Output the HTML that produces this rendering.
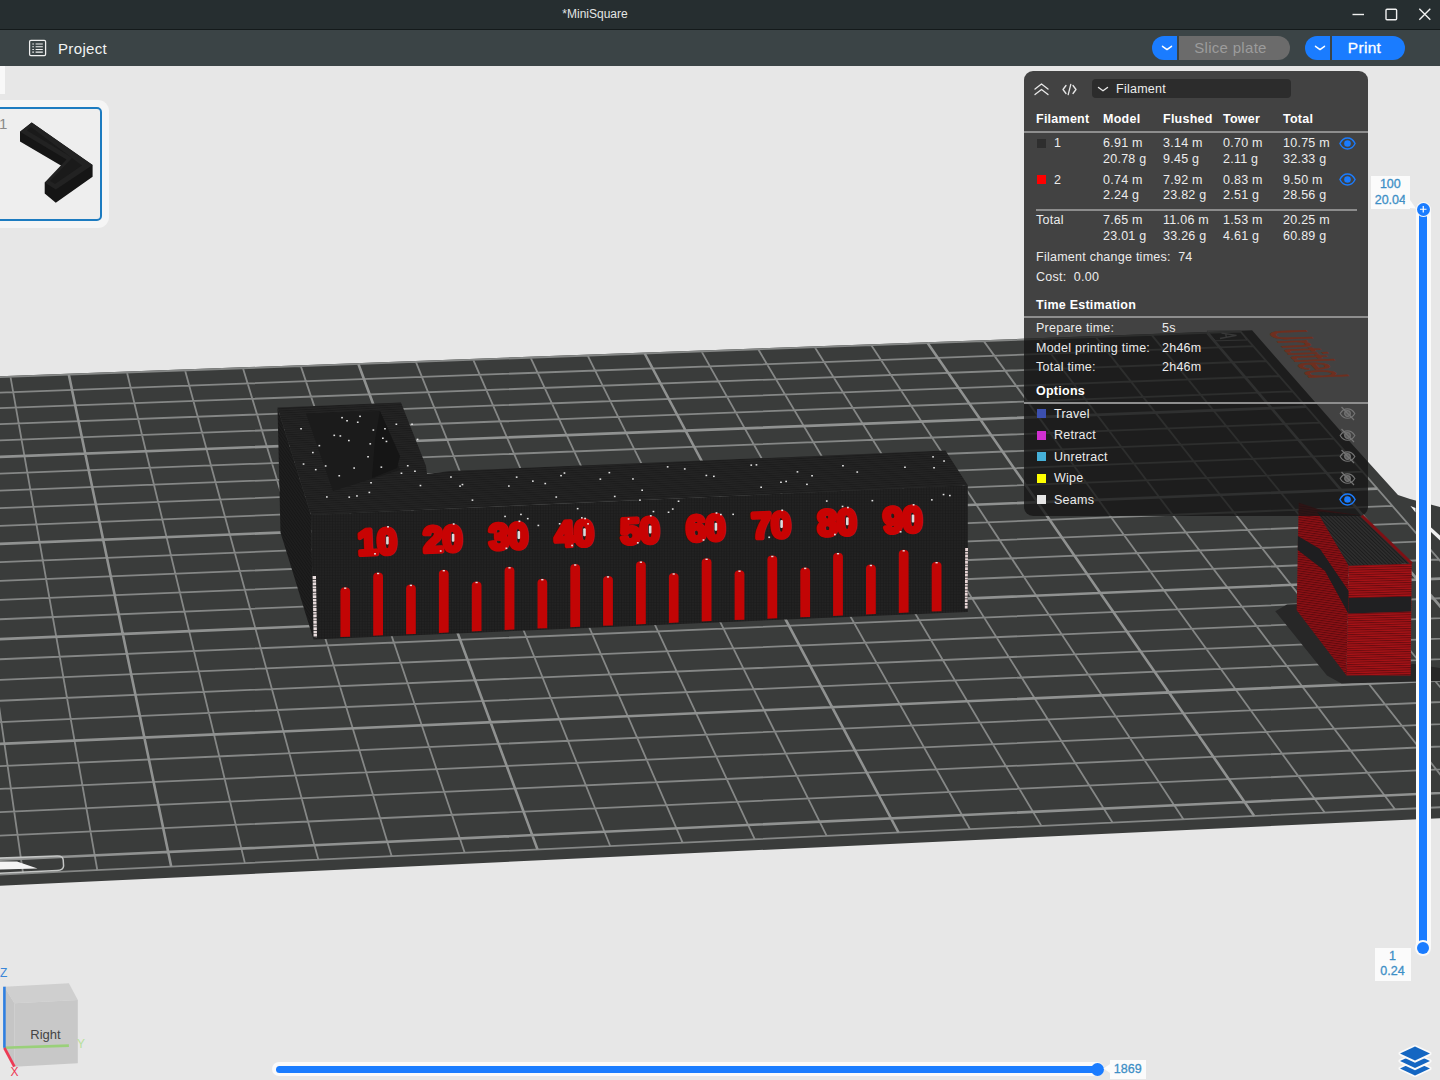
<!DOCTYPE html>
<html><head><meta charset="utf-8"><title>MiniSquare</title>
<style>
html,body{margin:0;padding:0}
body{width:1440px;height:1080px;overflow:hidden;background:#e7e7e7;font-family:"Liberation Sans",sans-serif;position:relative}
.abs{position:absolute}

#title{left:0;top:0;width:1440px;height:29px;background:#262e30}
#title .t{position:absolute;left:0;width:1190px;top:7px;text-align:center;color:#e3e5e5;font-size:12px}
#tab{left:0;top:29px;width:1440px;height:37px;background:#3b4446;border-top:1px solid #141a1b;box-sizing:border-box}
#tab .p{position:absolute;left:58px;top:9.5px;color:#f2f4f4;font-size:15px;letter-spacing:0.35px}
.btn{position:absolute;top:36px;height:24px}
.seg{position:absolute;top:0;height:24px;box-sizing:border-box}
.pnl{left:1024px;top:70.5px;width:344px;height:445px;border-radius:9px;background:rgba(22,22,22,0.79);color:#ececec;font-size:12.5px}
.pnl div{position:absolute;white-space:nowrap;line-height:14px;letter-spacing:0.25px}
.pnl .b{font-weight:bold;color:#fff}
.pnl .hl{height:1.5px;background:#8e8e8e}
.sw{width:9px;height:9px}
.lbl{background:#fbfbfb;color:#3d8fc6;-webkit-text-stroke:0.3px #3d8fc6;font-size:12.5px;text-align:center;line-height:15.5px}

</style></head><body>
<svg class="abs" style="left:0;top:66px" width="1440" height="1014" viewBox="0 0 1440 1014">
<polygon points="-580.3,331.5 1252.1,264.3 1353.9,380.3 1398.0,429.0 1410.0,433.0 1440.0,441.0 1500.0,454.0 1670.8,741.3 -656.0,850.5" fill="#3a3c3b"/>
<path d="M-165.3 317.2 L-125.8 814.4 M-106.6 315.1 L-51.2 810.9 M-48.0 312.9 L23.1 807.5 M10.5 310.8 L97.3 804.0 M127.0 306.5 L244.9 797.1 M185.1 304.4 L318.4 793.7 M243.0 302.2 L391.7 790.2 M300.8 300.1 L464.7 786.8 M415.9 295.9 L610.2 780.0 M473.3 293.8 L682.6 776.6 M530.6 291.7 L754.8 773.3 M587.7 289.6 L826.7 769.9 M701.5 285.4 L970.0 763.2 M758.2 283.3 L1041.4 759.9 M814.8 281.3 L1112.5 756.5 M871.3 279.2 L1183.4 753.2 M983.8 275.1 L1324.7 746.6 M1039.8 273.0 L1395.0 743.3 M1095.8 270.9 L1465.1 740.1 M1151.6 268.9 L1535.0 736.8 M1240.6 265.6 L1646.4 731.6 M-224.2 319.4 L1240.6 265.6 M-223.5 334.8 L1253.3 280.2 M-222.7 350.5 L1266.1 295.0 M-222.0 366.5 L1279.2 310.0 M-221.2 382.8 L1292.5 325.3 M-219.6 416.1 L1319.8 356.6 M-218.8 433.2 L1333.8 372.7 M-218.0 450.7 L1348.1 389.1 M-217.2 468.4 L1362.6 405.7 M-215.4 504.9 L1392.3 439.9 M-214.6 523.6 L1407.6 457.4 M-213.7 542.7 L1423.2 475.3 M-212.7 562.1 L1439.0 493.5 M-210.8 602.2 L1471.6 530.9 M-209.9 622.8 L1488.3 550.1 M-208.9 643.8 L1505.4 569.7 M-207.9 665.2 L1522.7 589.6 M-205.8 709.3 L1558.5 630.7 M-204.7 732.0 L1577.0 651.9 M-203.6 755.3 L1595.7 673.4 M-202.5 779.0 L1614.9 695.4 M-200.6 817.9 L1646.4 731.6" stroke="#858786" stroke-width="1.8" fill="none"/>
<path d="M-224.2 319.4 L-200.6 817.9 M68.8 308.6 L171.2 800.5 M358.4 298.0 L537.5 783.4 M644.7 287.5 L898.5 766.5 M927.6 277.1 L1254.2 749.9 M1207.3 266.9 L1604.7 733.5 M-220.4 399.3 L1306.1 340.8 M-216.3 486.5 L1377.3 422.6 M-211.8 582.0 L1455.1 512.0 M-206.8 687.0 L1540.5 610.0 M-201.3 803.1 L1634.5 717.9" stroke="#909291" stroke-width="2.6" fill="none"/>
<defs>
<pattern id="pf" width="2.7" height="2.7" patternUnits="userSpaceOnUse"><rect width="2.7" height="2.7" fill="#222222"/><path d="M0 0H2.7M0 0V2.7" stroke="#191919" stroke-width="1"/></pattern>
<pattern id="pt" width="3" height="2.2" patternUnits="userSpaceOnUse" patternTransform="rotate(-3)"><rect width="3" height="2.2" fill="#242424"/><path d="M0 0.5H3" stroke="#1b1b1b" stroke-width="0.9"/></pattern>
<pattern id="pl" width="2.4" height="2.4" patternUnits="userSpaceOnUse" patternTransform="rotate(55)"><rect width="2.4" height="2.4" fill="#1e1e1e"/><path d="M0 0.5H2.4" stroke="#161616" stroke-width="0.9"/></pattern>
<pattern id="rf" width="8" height="2.3" patternUnits="userSpaceOnUse" patternTransform="rotate(-1.5)"><rect width="8" height="2.3" fill="#a81216"/><path d="M0 0.5H8" stroke="#6a0c10" stroke-width="1"/></pattern>
<pattern id="rl" width="8" height="2.3" patternUnits="userSpaceOnUse" patternTransform="rotate(8)"><rect width="8" height="2.3" fill="#8e1014"/><path d="M0 0.5H8" stroke="#5e0a0e" stroke-width="1"/></pattern>
<pattern id="tt" width="2.6" height="6" patternUnits="userSpaceOnUse" patternTransform="rotate(-46)"><rect width="2.6" height="6" fill="#2e2e2e"/><path d="M0.5 0V6" stroke="#1c1c1c" stroke-width="1"/></pattern>
</defs>
<g transform="translate(0,-66)">
<path d="M-2 858.2 L57 856 Q63 855.8 63.2 860 L63.6 866 Q63.4 870.2 57 870.6 L-2 873.3" fill="none" stroke="#c4c6c5" stroke-width="1.5"/>
<polygon points="-1,861.6 17,861.5 37.5,868.6 -1,869.6" fill="#f4f4f4"/>
<polygon points="1410.5,506 1415.5,508 1415.5,512.5" fill="#f0f0f0"/>
<polygon points="1430.5,527 1440,535.5 1440,540.5 1430.5,531.5" fill="#f0f0f0"/>
<polygon points="1207,331 1240,330.6 1247,340 1215.5,340.8" fill="none" stroke="#9a9c9b" stroke-width="1"/>
<path d="M1220 338.5 L1236.5 335.3 L1221.5 333.2 M1226.5 337.3 L1225.5 333.8" fill="none" stroke="#b8b8b8" stroke-width="1.3"/>
<polygon points="277.5,407.5 311.0,515.0 313.5,639.4 280.5,532.5" fill="url(#pl)"/>
<polygon points="277.5,407.5 401.0,402.5 426.0,466.0 427.0,474.0 450.0,471.0 945.4,450.6 967.8,485.2 311.0,515.0" fill="url(#pt)"/>
<polygon points="306.0,413.5 380.0,411.0 400.0,470.0 333.0,491.0" fill="#1b1b1b"/>
<polygon points="380.0,411.0 400.0,456.0 397.0,468.0 372.0,478.0 375.0,440.0" fill="#151515"/>
<polygon points="311.0,515.0 967.8,485.2 967.8,612.0 313.5,639.4" fill="url(#pf)"/>
<path d="M340.4 637.1 V591.2 Q340.4 587.2 345.2 587.2 Q350.1 587.2 350.1 591.2 V636.7 Z" fill="#c20505"/>
<path d="M373.2 635.7 V576.5 Q373.2 572.5 378.1 572.5 Q383.0 572.5 383.0 576.5 V635.3 Z" fill="#c20505"/>
<path d="M406.1 634.3 V588.4 Q406.1 584.4 410.9 584.4 Q415.8 584.4 415.8 588.4 V633.9 Z" fill="#c20505"/>
<path d="M438.9 632.9 V573.7 Q438.9 569.7 443.8 569.7 Q448.7 569.7 448.7 573.7 V632.5 Z" fill="#c20505"/>
<path d="M471.8 631.4 V585.5 Q471.8 581.5 476.6 581.5 Q481.5 581.5 481.5 585.5 V631.0 Z" fill="#c20505"/>
<path d="M504.6 630.0 V570.8 Q504.6 566.8 509.5 566.8 Q514.4 566.8 514.4 570.8 V629.6 Z" fill="#c20505"/>
<path d="M537.5 628.6 V582.7 Q537.5 578.7 542.4 578.7 Q547.2 578.7 547.2 582.7 V628.2 Z" fill="#c20505"/>
<path d="M570.3 627.2 V568.0 Q570.3 564.0 575.2 564.0 Q580.1 564.0 580.1 568.0 V626.8 Z" fill="#c20505"/>
<path d="M603.1 625.8 V579.9 Q603.1 575.9 608.0 575.9 Q612.9 575.9 612.9 579.9 V625.4 Z" fill="#c20505"/>
<path d="M636.0 624.4 V565.2 Q636.0 561.2 640.9 561.2 Q645.8 561.2 645.8 565.2 V624.0 Z" fill="#c20505"/>
<path d="M668.9 622.9 V577.0 Q668.9 573.0 673.8 573.0 Q678.6 573.0 678.6 577.0 V622.5 Z" fill="#c20505"/>
<path d="M701.7 621.5 V562.3 Q701.7 558.3 706.6 558.3 Q711.5 558.3 711.5 562.3 V621.1 Z" fill="#c20505"/>
<path d="M734.6 620.1 V574.2 Q734.6 570.2 739.5 570.2 Q744.4 570.2 744.4 574.2 V619.7 Z" fill="#c20505"/>
<path d="M767.4 618.7 V559.5 Q767.4 555.5 772.3 555.5 Q777.2 555.5 777.2 559.5 V618.3 Z" fill="#c20505"/>
<path d="M800.3 617.3 V571.4 Q800.3 567.4 805.2 567.4 Q810.1 567.4 810.1 571.4 V616.9 Z" fill="#c20505"/>
<path d="M833.1 615.9 V556.7 Q833.1 552.7 838.0 552.7 Q842.9 552.7 842.9 556.7 V615.5 Z" fill="#c20505"/>
<path d="M866.0 614.4 V568.5 Q866.0 564.5 870.9 564.5 Q875.8 564.5 875.8 568.5 V614.0 Z" fill="#c20505"/>
<path d="M898.8 613.0 V553.8 Q898.8 549.8 903.7 549.8 Q908.6 549.8 908.6 553.8 V612.6 Z" fill="#c20505"/>
<path d="M931.7 611.6 V565.7 Q931.7 561.7 936.6 561.7 Q941.5 561.7 941.5 565.7 V611.2 Z" fill="#c20505"/>
<text x="376.6" y="554.2" transform="rotate(-2.5 378.1 541.0)" font-family="Liberation Sans" font-weight="bold" font-size="36" letter-spacing="-0.5" text-anchor="middle" fill="#c80303" stroke="#c80303" stroke-width="4.2" stroke-linejoin="round">10</text>
<text x="442.3" y="551.4" transform="rotate(-2.5 443.8 538.2)" font-family="Liberation Sans" font-weight="bold" font-size="36" letter-spacing="-0.5" text-anchor="middle" fill="#c80303" stroke="#c80303" stroke-width="4.2" stroke-linejoin="round">20</text>
<text x="508.0" y="548.7" transform="rotate(-2.5 509.5 535.5)" font-family="Liberation Sans" font-weight="bold" font-size="36" letter-spacing="-0.5" text-anchor="middle" fill="#c80303" stroke="#c80303" stroke-width="4.2" stroke-linejoin="round">30</text>
<text x="573.7" y="545.9" transform="rotate(-2.5 575.2 532.7)" font-family="Liberation Sans" font-weight="bold" font-size="36" letter-spacing="-0.5" text-anchor="middle" fill="#c80303" stroke="#c80303" stroke-width="4.2" stroke-linejoin="round">40</text>
<text x="639.4" y="543.2" transform="rotate(-2.5 640.9 530.0)" font-family="Liberation Sans" font-weight="bold" font-size="36" letter-spacing="-0.5" text-anchor="middle" fill="#c80303" stroke="#c80303" stroke-width="4.2" stroke-linejoin="round">50</text>
<text x="705.1" y="540.4" transform="rotate(-2.5 706.6 527.2)" font-family="Liberation Sans" font-weight="bold" font-size="36" letter-spacing="-0.5" text-anchor="middle" fill="#c80303" stroke="#c80303" stroke-width="4.2" stroke-linejoin="round">60</text>
<text x="770.8" y="537.7" transform="rotate(-2.5 772.3 524.5)" font-family="Liberation Sans" font-weight="bold" font-size="36" letter-spacing="-0.5" text-anchor="middle" fill="#c80303" stroke="#c80303" stroke-width="4.2" stroke-linejoin="round">70</text>
<text x="836.5" y="534.9" transform="rotate(-2.5 838.0 521.7)" font-family="Liberation Sans" font-weight="bold" font-size="36" letter-spacing="-0.5" text-anchor="middle" fill="#c80303" stroke="#c80303" stroke-width="4.2" stroke-linejoin="round">80</text>
<text x="902.2" y="532.2" transform="rotate(-2.5 903.7 519.0)" font-family="Liberation Sans" font-weight="bold" font-size="36" letter-spacing="-0.5" text-anchor="middle" fill="#c80303" stroke="#c80303" stroke-width="4.2" stroke-linejoin="round">90</text>
<g fill="#dcdcdc"><rect x="344.1" y="587.5" width="2.2" height="1.4"/><rect x="377.0" y="572.8" width="2.2" height="1.4"/><rect x="409.8" y="584.7" width="2.2" height="1.4"/><rect x="442.7" y="570.0" width="2.2" height="1.4"/><rect x="475.5" y="581.8" width="2.2" height="1.4"/><rect x="508.4" y="567.1" width="2.2" height="1.4"/><rect x="541.2" y="579.0" width="2.2" height="1.4"/><rect x="574.1" y="564.3" width="2.2" height="1.4"/><rect x="606.9" y="576.2" width="2.2" height="1.4"/><rect x="639.8" y="561.5" width="2.2" height="1.4"/><rect x="672.6" y="573.3" width="2.2" height="1.4"/><rect x="705.5" y="558.6" width="2.2" height="1.4"/><rect x="738.4" y="570.5" width="2.2" height="1.4"/><rect x="771.2" y="555.8" width="2.2" height="1.4"/><rect x="804.1" y="567.7" width="2.2" height="1.4"/><rect x="836.9" y="553.0" width="2.2" height="1.4"/><rect x="869.8" y="564.8" width="2.2" height="1.4"/><rect x="902.6" y="550.1" width="2.2" height="1.4"/><rect x="935.5" y="562.0" width="2.2" height="1.4"/><rect x="386.1" y="536.5" width="2.6" height="8" rx="1"/><rect x="374.1" y="553.0" width="1.8" height="1.6"/><rect x="387.1" y="526.0" width="1.8" height="1.6"/><rect x="451.8" y="533.7" width="2.6" height="8" rx="1"/><rect x="439.8" y="550.2" width="1.8" height="1.6"/><rect x="452.8" y="523.2" width="1.8" height="1.6"/><rect x="517.5" y="531.0" width="2.6" height="8" rx="1"/><rect x="505.5" y="547.5" width="1.8" height="1.6"/><rect x="518.5" y="520.5" width="1.8" height="1.6"/><rect x="583.2" y="528.2" width="2.6" height="8" rx="1"/><rect x="571.2" y="544.7" width="1.8" height="1.6"/><rect x="584.2" y="517.7" width="1.8" height="1.6"/><rect x="648.9" y="525.5" width="2.6" height="8" rx="1"/><rect x="636.9" y="542.0" width="1.8" height="1.6"/><rect x="649.9" y="515.0" width="1.8" height="1.6"/><rect x="714.6" y="522.7" width="2.6" height="8" rx="1"/><rect x="702.6" y="539.2" width="1.8" height="1.6"/><rect x="715.6" y="512.2" width="1.8" height="1.6"/><rect x="780.3" y="520.0" width="2.6" height="8" rx="1"/><rect x="768.3" y="536.5" width="1.8" height="1.6"/><rect x="781.3" y="509.5" width="1.8" height="1.6"/><rect x="846.0" y="517.2" width="2.6" height="8" rx="1"/><rect x="834.0" y="533.7" width="1.8" height="1.6"/><rect x="847.0" y="506.7" width="1.8" height="1.6"/><rect x="911.7" y="514.5" width="2.6" height="8" rx="1"/><rect x="899.7" y="531.0" width="1.8" height="1.6"/><rect x="912.7" y="504.0" width="1.8" height="1.6"/></g>
<g fill="#e4e4e4"><rect x="338.4" y="475.0" width="1.7" height="1.5"/><rect x="324.8" y="465.2" width="1.7" height="1.5"/><rect x="346.2" y="420.0" width="1.7" height="1.5"/><rect x="581.0" y="517.1" width="1.7" height="1.5"/><rect x="382.0" y="437.5" width="1.7" height="1.5"/><rect x="395.5" y="423.5" width="1.7" height="1.5"/><rect x="504.2" y="515.7" width="1.7" height="1.5"/><rect x="419.6" y="484.8" width="1.7" height="1.5"/><rect x="339.5" y="435.2" width="1.7" height="1.5"/><rect x="750.4" y="464.4" width="1.7" height="1.5"/><rect x="508.0" y="485.3" width="1.7" height="1.5"/><rect x="825.9" y="500.3" width="1.7" height="1.5"/><rect x="461.6" y="483.8" width="1.7" height="1.5"/><rect x="576.8" y="507.9" width="1.7" height="1.5"/><rect x="400.6" y="472.5" width="1.7" height="1.5"/><rect x="326.0" y="496.2" width="1.7" height="1.5"/><rect x="806.1" y="483.6" width="1.7" height="1.5"/><rect x="760.3" y="486.5" width="1.7" height="1.5"/><rect x="683.9" y="468.2" width="1.7" height="1.5"/><rect x="613.9" y="495.7" width="1.7" height="1.5"/><rect x="555.4" y="496.3" width="1.7" height="1.5"/><rect x="314.9" y="468.9" width="1.7" height="1.5"/><rect x="411.2" y="423.5" width="1.7" height="1.5"/><rect x="385.6" y="440.7" width="1.7" height="1.5"/><rect x="558.8" y="523.0" width="1.7" height="1.5"/><rect x="353.3" y="467.3" width="1.7" height="1.5"/><rect x="537.5" y="524.7" width="1.7" height="1.5"/><rect x="416.7" y="438.6" width="1.7" height="1.5"/><rect x="302.7" y="463.3" width="1.7" height="1.5"/><rect x="544.4" y="482.8" width="1.7" height="1.5"/><rect x="931.0" y="499.1" width="1.7" height="1.5"/><rect x="641.3" y="489.5" width="1.7" height="1.5"/><rect x="368.5" y="491.7" width="1.7" height="1.5"/><rect x="341.2" y="416.9" width="1.7" height="1.5"/><rect x="300.2" y="428.0" width="1.7" height="1.5"/><rect x="367.2" y="456.0" width="1.7" height="1.5"/><rect x="608.5" y="471.9" width="1.7" height="1.5"/><rect x="356.9" y="421.5" width="1.7" height="1.5"/><rect x="871.5" y="499.9" width="1.7" height="1.5"/><rect x="652.6" y="510.8" width="1.7" height="1.5"/><rect x="841.7" y="505.7" width="1.7" height="1.5"/><rect x="450.1" y="476.3" width="1.7" height="1.5"/><rect x="318.5" y="444.9" width="1.7" height="1.5"/><rect x="471.6" y="499.4" width="1.7" height="1.5"/><rect x="933.2" y="467.0" width="1.7" height="1.5"/><rect x="932.2" y="456.1" width="1.7" height="1.5"/><rect x="856.4" y="471.3" width="1.7" height="1.5"/><rect x="732.3" y="513.6" width="1.7" height="1.5"/><rect x="356.1" y="495.2" width="1.7" height="1.5"/><rect x="796.6" y="471.1" width="1.7" height="1.5"/><rect x="520.1" y="513.7" width="1.7" height="1.5"/><rect x="943.2" y="460.3" width="1.7" height="1.5"/><rect x="384.1" y="428.0" width="1.7" height="1.5"/><rect x="949.0" y="494.8" width="1.7" height="1.5"/><rect x="532.0" y="480.4" width="1.7" height="1.5"/><rect x="942.7" y="493.8" width="1.7" height="1.5"/><rect x="587.2" y="523.1" width="1.7" height="1.5"/><rect x="459.2" y="485.4" width="1.7" height="1.5"/><rect x="632.1" y="478.2" width="1.7" height="1.5"/><rect x="414.1" y="470.5" width="1.7" height="1.5"/><rect x="780.1" y="481.5" width="1.7" height="1.5"/><rect x="515.8" y="476.4" width="1.7" height="1.5"/><rect x="667.7" y="511.5" width="1.7" height="1.5"/><rect x="370.2" y="482.0" width="1.7" height="1.5"/><rect x="811.2" y="475.0" width="1.7" height="1.5"/><rect x="671.9" y="508.3" width="1.7" height="1.5"/><rect x="904.1" y="466.5" width="1.7" height="1.5"/><rect x="705.5" y="474.7" width="1.7" height="1.5"/><rect x="639.1" y="499.4" width="1.7" height="1.5"/><rect x="599.5" y="478.4" width="1.7" height="1.5"/><rect x="380.5" y="466.4" width="1.7" height="1.5"/><rect x="348.0" y="439.8" width="1.7" height="1.5"/><rect x="348.4" y="496.4" width="1.7" height="1.5"/><rect x="563.6" y="472.3" width="1.7" height="1.5"/><rect x="406.9" y="465.0" width="1.7" height="1.5"/><rect x="666.8" y="466.1" width="1.7" height="1.5"/><rect x="312.0" y="451.8" width="1.7" height="1.5"/><rect x="713.0" y="475.6" width="1.7" height="1.5"/><rect x="369.4" y="443.1" width="1.7" height="1.5"/><rect x="677.7" y="500.5" width="1.7" height="1.5"/><rect x="359.2" y="415.6" width="1.7" height="1.5"/><rect x="755.6" y="464.1" width="1.7" height="1.5"/><rect x="720.0" y="513.8" width="1.7" height="1.5"/><rect x="372.5" y="429.3" width="1.7" height="1.5"/><rect x="333.4" y="434.6" width="1.7" height="1.5"/><rect x="785.3" y="480.7" width="1.7" height="1.5"/><rect x="842.1" y="465.0" width="1.7" height="1.5"/><rect x="627.7" y="518.2" width="1.7" height="1.5"/><rect x="560.2" y="474.9" width="1.7" height="1.5"/><rect x="526.9" y="517.9" width="1.7" height="1.5"/></g>
<path d="M314.3 576 L315.3 637.5" stroke="#e8dcdc" stroke-width="3.4" stroke-dasharray="3 0.8 2 0.6"/>
<path d="M966.6 548 L966.2 609" stroke="#e8d6d6" stroke-width="2.8" stroke-dasharray="3 0.8 2 0.6"/>
<polygon points="1275.3,611.3 1287.0,604.5 1300.0,604.0 1346.0,668.0 1414.0,664.0 1440.0,668.0 1440.0,681.0 1341.5,683.6 1327.0,675.5" fill="#272727"/>
<polygon points="1298.7,502.4 1318.0,509.0 1361.8,515.6 1348.6,565.5 1346.5,675.5 1296.7,610.3" fill="url(#rl)"/>
<polygon points="1348.6,565.5 1411.7,563.5 1410.7,675.5 1346.5,675.5" fill="url(#rf)"/>
<polygon points="1317.0,511.5 1361.8,515.6 1411.7,563.5 1348.6,565.5" fill="url(#tt)"/>
<path d="M1361.8 515.6 L1411.7 563.5" stroke="#7c1014" stroke-width="3"/>
<polygon points="1348.6,598.0 1411.2,596.5 1411.0,611.5 1348.3,613.4" fill="#202022"/>
<polygon points="1297.9,536.0 1320.0,549.0 1348.6,591.0 1348.3,613.4 1325.0,571.0 1297.7,550.0" fill="#1e1e20"/>
</g>
</svg>

<div class="abs" id="title"><div class="t">*MiniSquare</div>
<svg class="abs" style="left:1345px;top:3.5px" width="92" height="22" viewBox="0 0 92 22"><g fill="none" stroke="#f0f0f0" stroke-width="1.4"><path d="M7.5 10.5 H19"/><rect x="41" y="5.2" width="10.6" height="10.6" rx="1"/><path d="M74.3 4.8 L85.3 15.8 M85.3 4.8 L74.3 15.8"/></g></svg>
</div>
<div class="abs" id="tab">
<svg class="abs" style="left:28px;top:9px" width="20" height="19" viewBox="0 0 20 19"><g fill="none" stroke="#f0f0f0" stroke-width="1.25"><rect x="1.6" y="1.4" width="16" height="15.2" rx="1.3"/><path d="M4.3 5 H5.9 M7.6 5 H14.8 M4.3 7.7 H5.9 M7.6 7.7 H14.8 M4.3 10.4 H5.9 M7.6 10.4 H14.8 M4.3 13.1 H5.9 M7.6 13.1 H14.8" stroke-width="1.05"/></g></svg>
<div class="p">Project</div>
</div>
<div class="btn" style="left:1152px;width:138px">
 <div class="seg" style="left:0;width:25px;background:#1a7cff;border-radius:12px 0 0 12px"></div>
 <div class="seg" style="left:27px;width:111px;background:#6b6b6b;border-radius:0 12px 12px 0;color:#9c9c9c;font-size:15px;letter-spacing:0.3px;text-align:center;line-height:24px;padding-right:8px">Slice plate</div>
 <svg class="abs" style="left:7.8px;top:7px" width="14" height="10" viewBox="0 0 14 10"><path d="M2.5 3.3 L7 6.6 L11.5 3.3" fill="none" stroke="#fff" stroke-width="1.5" stroke-linecap="round" stroke-linejoin="round"/></svg>
</div>
<div class="btn" style="left:1305px;width:100px">
 <div class="seg" style="left:0;width:25px;background:#1a7cff;border-radius:12px 0 0 12px"></div>
 <div class="seg" style="left:27px;width:73px;background:#1a7cff;border-radius:0 12px 12px 0;color:#fff;font-size:15.5px;letter-spacing:0.3px;-webkit-text-stroke:0.3px #fff;text-align:center;line-height:24px;padding-right:8px">Print</div>
 <svg class="abs" style="left:7.8px;top:7px" width="14" height="10" viewBox="0 0 14 10"><path d="M2.5 3.3 L7 6.6 L11.5 3.3" fill="none" stroke="#fff" stroke-width="1.5" stroke-linecap="round" stroke-linejoin="round"/></svg>
</div>

<!-- plate thumbnail -->
<div class="abs" style="left:0;top:66px;width:5px;height:28px;background:#f8f8f8"></div>
<div class="abs" style="left:-20px;top:100px;width:128.5px;height:127.5px;border-radius:11px;background:#f5f5f5"></div>
<div class="abs" style="left:-20px;top:107px;width:122px;height:113.5px;border-radius:5px;background:#eeeeee;border:2.2px solid #1c7bc0;box-sizing:border-box"></div>
<div class="abs" style="left:-1px;top:115px;color:#8a8a8a;font-size:15px">1</div>
<svg class="abs" style="left:0;top:100px" width="110" height="128" viewBox="0 100 110 128">
<polygon points="31.7,122.5 20,131.7 20,141.5 66,168.5 44.7,182.5 44.7,193.5 55.8,202.7 92.6,176.7 92.6,165" fill="#151515"/>
<polygon points="31.7,122.5 20,131.7 66.5,159.5 44.7,182.5 55.8,189.5 92.6,165" fill="#222"/>
<polygon points="31,127 27,130.5 66,154 72,158 50,181 55,184 82,165.5" fill="#1a1a1a"/>
</svg>

<div class="abs pnl"><svg class="abs" style="left:8px;top:9px" width="50" height="20" viewBox="0 0 50 20"><g fill="none" stroke="#e8e8e8" stroke-width="1.3" stroke-linecap="round" stroke-linejoin="round"><path d="M3 9 L9.5 4 L16 9"/><path d="M3 14.5 L9.5 9.5 L16 14.5"/><path d="M41 5.5 L44 9.5 L41 13.5"/><path d="M34 5.5 L31 9.5 L34 13.5"/><path d="M38.8 4.3 L36.2 14.7"/></g></svg><div style="left:68px;top:8.5px;width:199px;height:19px;background:#2c2c2c;border-radius:4px"></div><svg class="abs" style="left:72px;top:13px" width="14" height="10" viewBox="0 0 14 10"><path d="M2.5 3.5 L7 6.8 L11.5 3.5" fill="none" stroke="#e8e8e8" stroke-width="1.4" stroke-linecap="round" stroke-linejoin="round"/></svg><div class="" style="left:92.0px;top:11.5px">Filament</div><div class="b" style="left:12.0px;top:41.5px">Filament</div><div class="b" style="left:79.0px;top:41.5px">Model</div><div class="b" style="left:139.0px;top:41.5px">Flushed</div><div class="b" style="left:199.0px;top:41.5px">Tower</div><div class="b" style="left:259.0px;top:41.5px">Total</div><div class="hl" style="left:0;top:60.5px;width:344px"></div><div class="sw" style="left:12.5px;top:68.0px;background:#2e2e2e"></div><div class="" style="left:30.0px;top:65.5px">1</div><div class="" style="left:79.0px;top:65.5px">6.91 m</div><div class="" style="left:139.0px;top:65.5px">3.14 m</div><div class="" style="left:199.0px;top:65.5px">0.70 m</div><div class="" style="left:259.0px;top:65.5px">10.75 m</div><div class="" style="left:79.0px;top:81.2px">20.78 g</div><div class="" style="left:139.0px;top:81.2px">9.45 g</div><div class="" style="left:199.0px;top:81.2px">2.11 g</div><div class="" style="left:259.0px;top:81.2px">32.33 g</div><div class="sw" style="left:12.5px;top:104.5px;background:#ff0000"></div><div class="" style="left:30.0px;top:102.0px">2</div><div class="" style="left:79.0px;top:102.0px">0.74 m</div><div class="" style="left:139.0px;top:102.0px">7.92 m</div><div class="" style="left:199.0px;top:102.0px">0.83 m</div><div class="" style="left:259.0px;top:102.0px">9.50 m</div><div class="" style="left:79.0px;top:117.7px">2.24 g</div><div class="" style="left:139.0px;top:117.7px">23.82 g</div><div class="" style="left:199.0px;top:117.7px">2.51 g</div><div class="" style="left:259.0px;top:117.7px">28.56 g</div><div class="hl" style="left:12px;top:138.5px;width:321px;background:#8c8c8c"></div><div class="" style="left:12.0px;top:142.8px">Total</div><div class="" style="left:79.0px;top:142.8px">7.65 m</div><div class="" style="left:139.0px;top:142.8px">11.06 m</div><div class="" style="left:199.0px;top:142.8px">1.53 m</div><div class="" style="left:259.0px;top:142.8px">20.25 m</div><div class="" style="left:79.0px;top:158.5px">23.01 g</div><div class="" style="left:139.0px;top:158.5px">33.26 g</div><div class="" style="left:199.0px;top:158.5px">4.61 g</div><div class="" style="left:259.0px;top:158.5px">60.89 g</div><div class="" style="left:12.0px;top:179.5px">Filament change times:&nbsp;&nbsp;74</div><div class="" style="left:12.0px;top:199.0px">Cost:&nbsp;&nbsp;0.00</div><div class="b" style="left:12.0px;top:227.0px">Time Estimation</div><div class="hl" style="left:0;top:245.5px;width:344px"></div><div class="" style="left:12.0px;top:250.5px">Prepare time:</div><div class="" style="left:138.0px;top:250.5px">5s</div><div class="" style="left:12.0px;top:270.0px">Model printing time:</div><div class="" style="left:138.0px;top:270.0px">2h46m</div><div class="" style="left:12.0px;top:289.5px">Total time:</div><div class="" style="left:138.0px;top:289.5px">2h46m</div><div class="b" style="left:12.0px;top:313.0px">Options</div><div class="hl" style="left:0;top:331.5px;width:344px"></div><div class="sw" style="left:12.5px;top:338.5px;background:#3c50b0"></div><div class="" style="left:30.0px;top:336.0px">Travel</div><svg class="abs" style="left:314.5px;top:335.5px" width="17" height="15" viewBox="0 0 17 15"><g fill="none" stroke="#747474" stroke-width="1.2"><path d="M1.2 7.5 C4.7 1.2 12.3 1.2 15.8 7.5 C12.3 13.8 4.7 13.8 1.2 7.5Z"/><circle cx="8.5" cy="7.5" r="2.8" fill="#5a5a5a"/><path d="M2.5 1 L15 14"/></g></svg><div class="sw" style="left:12.5px;top:360.0px;background:#d030d0"></div><div class="" style="left:30.0px;top:357.5px">Retract</div><svg class="abs" style="left:314.5px;top:357.0px" width="17" height="15" viewBox="0 0 17 15"><g fill="none" stroke="#747474" stroke-width="1.2"><path d="M1.2 7.5 C4.7 1.2 12.3 1.2 15.8 7.5 C12.3 13.8 4.7 13.8 1.2 7.5Z"/><circle cx="8.5" cy="7.5" r="2.8" fill="#5a5a5a"/><path d="M2.5 1 L15 14"/></g></svg><div class="sw" style="left:12.5px;top:381.5px;background:#46b0d8"></div><div class="" style="left:30.0px;top:379.0px">Unretract</div><svg class="abs" style="left:314.5px;top:378.5px" width="17" height="15" viewBox="0 0 17 15"><g fill="none" stroke="#747474" stroke-width="1.2"><path d="M1.2 7.5 C4.7 1.2 12.3 1.2 15.8 7.5 C12.3 13.8 4.7 13.8 1.2 7.5Z"/><circle cx="8.5" cy="7.5" r="2.8" fill="#5a5a5a"/><path d="M2.5 1 L15 14"/></g></svg><div class="sw" style="left:12.5px;top:403.0px;background:#ffff00"></div><div class="" style="left:30.0px;top:400.5px">Wipe</div><svg class="abs" style="left:314.5px;top:400.0px" width="17" height="15" viewBox="0 0 17 15"><g fill="none" stroke="#747474" stroke-width="1.2"><path d="M1.2 7.5 C4.7 1.2 12.3 1.2 15.8 7.5 C12.3 13.8 4.7 13.8 1.2 7.5Z"/><circle cx="8.5" cy="7.5" r="2.8" fill="#5a5a5a"/><path d="M2.5 1 L15 14"/></g></svg><div class="sw" style="left:12.5px;top:424.5px;background:#e6e6e6"></div><div class="" style="left:30.0px;top:422.0px">Seams</div><svg class="abs" style="left:314.5px;top:422.5px" width="17" height="13" viewBox="0 0 17 13"><path d="M0.9 6.5 C4.5 -0.9 12.5 -0.9 16.1 6.5 C12.5 13.9 4.5 13.9 0.9 6.5Z" fill="none" stroke="#1a7cff" stroke-width="1.4"/><circle cx="8.5" cy="6.5" r="3.3" fill="#1a7cff"/></svg><svg class="abs" style="left:314.5px;top:66.0px" width="17" height="13" viewBox="0 0 17 13"><path d="M0.9 6.5 C4.5 -0.9 12.5 -0.9 16.1 6.5 C12.5 13.9 4.5 13.9 0.9 6.5Z" fill="none" stroke="#1a7cff" stroke-width="1.4"/><circle cx="8.5" cy="6.5" r="3.3" fill="#1a7cff"/></svg><svg class="abs" style="left:314.5px;top:102.5px" width="17" height="13" viewBox="0 0 17 13"><path d="M0.9 6.5 C4.5 -0.9 12.5 -0.9 16.1 6.5 C12.5 13.9 4.5 13.9 0.9 6.5Z" fill="none" stroke="#1a7cff" stroke-width="1.4"/><circle cx="8.5" cy="6.5" r="3.3" fill="#1a7cff"/></svg></div>

<!-- vertical slider -->
<div class="abs" style="left:1415.5px;top:205px;width:15px;height:748px;background:#fafafa;border-radius:7px"></div>
<div class="abs" style="left:1419.3px;top:209px;width:7.4px;height:739px;background:#1a7cff"></div>
<div class="abs" style="left:1415.5px;top:201.5px;width:15.5px;height:15.5px;border-radius:8px;background:#fafafa"></div>
<div class="abs" style="left:1417px;top:203px;width:12.5px;height:12.5px;border-radius:7px;background:#1a7cff"></div>
<svg class="abs" style="left:1417px;top:203px" width="13" height="13" viewBox="0 0 13 13"><path d="M6.25 3 V9.5 M3 6.25 H9.5" stroke="#fff" stroke-width="1.2"/></svg>
<div class="abs" style="left:1415px;top:940px;width:16px;height:16px;border-radius:8px;background:#fafafa"></div>
<div class="abs" style="left:1416.7px;top:941.5px;width:12.5px;height:12.5px;border-radius:7px;background:#1a7cff"></div>
<div class="abs lbl" style="left:1370.7px;top:176px;width:39.3px;height:32px;padding-top:1px">100<br>20.04</div>
<div class="abs lbl" style="left:1374.5px;top:947.5px;width:36px;height:32px;padding-top:1px">1<br>0.24</div>
<svg class="abs" style="left:1404px;top:200px" width="14" height="10" viewBox="0 0 14 10"><polygon points="0,0 6,0 12,8.5 6,8" fill="#fbfbfb"/></svg>
<svg class="abs" style="left:1404px;top:946px" width="14" height="10" viewBox="0 0 14 10"><polygon points="0,8 6,2 12,0 6,2" fill="#fbfbfb"/></svg>

<!-- horizontal slider -->
<div class="abs" style="left:272px;top:1062px;width:832px;height:14px;background:#fafafa;border-radius:7px"></div>
<div class="abs" style="left:275.5px;top:1065.5px;width:822px;height:7.2px;background:#1a7cff;border-radius:3.6px"></div>
<div class="abs" style="left:1090.5px;top:1062.5px;width:13.5px;height:13.5px;border-radius:7px;background:#1a7cff"></div>
<svg class="abs" style="left:1102px;top:1060px" width="10" height="18" viewBox="0 0 10 18"><polygon points="1.5,8.5 8,4 8,13" fill="#fbfbfb"/></svg>
<div class="abs lbl" style="left:1109.5px;top:1060px;width:36.5px;height:19px;line-height:19px">1869</div>

<!-- layers icon -->
<svg class="abs" style="left:1396px;top:1043px" width="38" height="36" viewBox="0 0 38 36">
<g stroke="#fafafa" stroke-width="3.2" stroke-linejoin="round" fill="#fafafa"><polygon points="19,3.5 34,10.5 19,17.5 4,10.5"/><polygon points="19,11 34,18 19,25 4,18"/><polygon points="19,18.5 34,25.5 19,32.5 4,25.5"/></g>
<g fill="#1466c2"><polygon points="19,18.5 34,25.5 19,32.5 4,25.5"/></g>
<g fill="#fafafa"><polygon points="19,13.2 34,20.2 19,27.2 4,20.2"/></g>
<g fill="#1466c2"><polygon points="19,11 34,18 19,25 4,18"/></g>
<g fill="#fafafa"><polygon points="19,5.7 34,12.7 19,19.7 4,12.7"/></g>
<g fill="#1466c2"><polygon points="19,3.5 34,10.5 19,17.5 4,10.5"/></g>
</svg>

<!-- view cube -->
<svg class="abs" style="left:0;top:960px" width="100" height="120" viewBox="0 960 100 120">
<polygon points="4.4,986.7 68.9,983.3 77.8,1000 14.4,1003.3" fill="#cfcfcf"/>
<polygon points="4.4,986.7 14.4,1003.3 14.4,1066.7 4.4,1047.8" fill="#c5c5c5"/>
<polygon points="14.4,1003.3 77.8,1000 77.8,1063.3 14.4,1066.7" fill="#c8c8c8"/>
<path d="M4.4 1047.8 L68.9 1045.6" stroke="#9ad07a" stroke-width="2.6"/>
<path d="M4.4 986.7 L4.4 1047.8" stroke="#2f7fe0" stroke-width="2.6"/>
<path d="M4.4 1047.8 L14.4 1066.7" stroke="#ec3b55" stroke-width="2.8"/>
<text x="0" y="977" font-family="Liberation Sans" font-size="12" fill="#3a86d8">Z</text>
<text x="77" y="1048" font-family="Liberation Sans" font-size="12" fill="#b7e09c">Y</text>
<text x="10.5" y="1076" font-family="Liberation Sans" font-size="12" fill="#ec3b55">X</text>
<text x="45.5" y="1038.5" font-family="Liberation Sans" font-size="13" fill="#444" text-anchor="middle">Right</text>
</svg>

<svg class="abs" style="left:0;top:0;pointer-events:none" width="1440" height="1080" viewBox="0 0 1440 1080"><text transform="matrix(1.3072,1.4744,-5.6088,0.2083,1267.59,330.40)" x="0" y="0" font-family="Liberation Sans" font-size="9.6" fill="#6e2f1f" stroke="#6e2f1f" stroke-width="0.3">Untitled</text></svg>
</body></html>
